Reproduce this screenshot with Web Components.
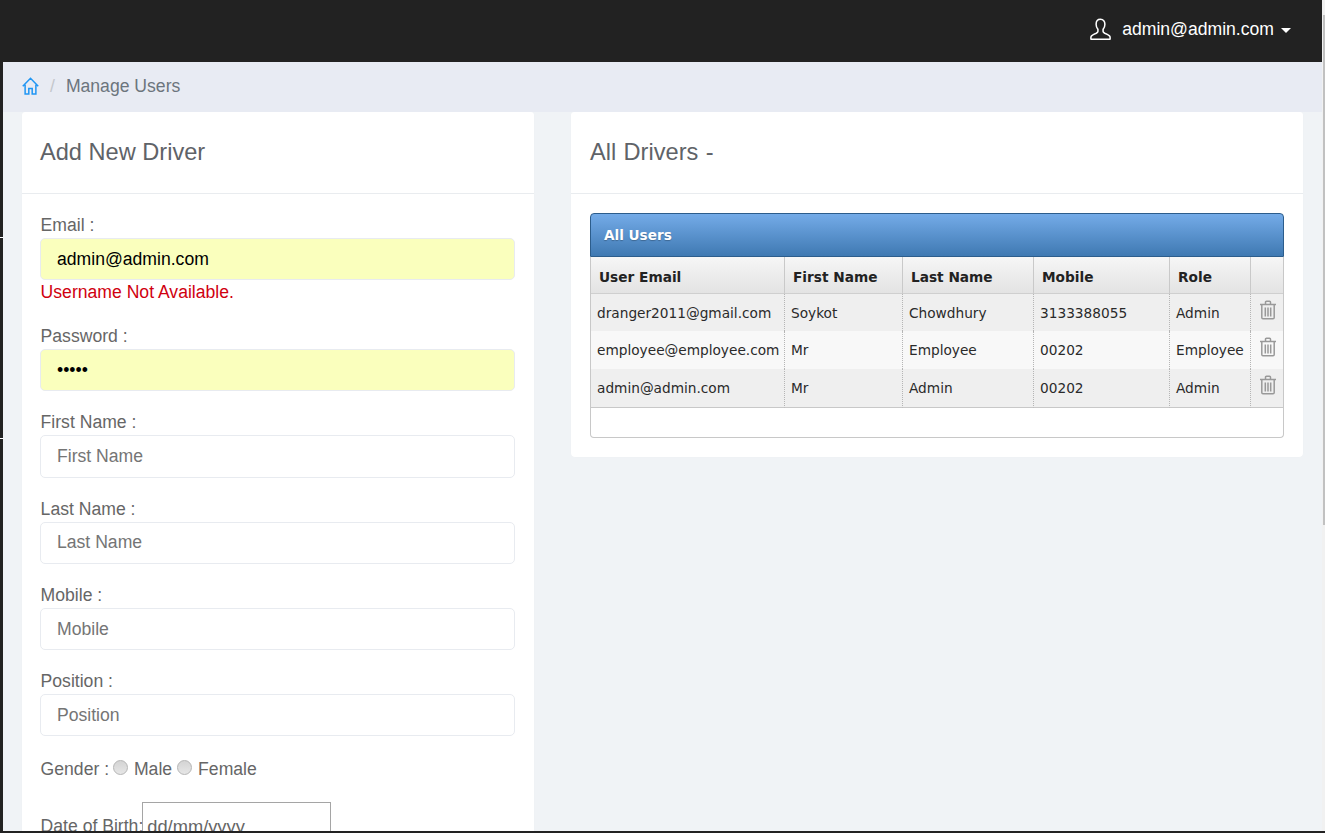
<!DOCTYPE html>
<html lang="en">
<head>
<meta charset="utf-8">
<title>Manage Users</title>
<style>
html,body{margin:0;padding:0;height:833px;overflow:hidden;background:#f0f3f6;font-family:"Liberation Sans",Arial,sans-serif}
</style>
</head>
<body>
<app-frame>
  <top-bar slot="top" email="admin@admin.com"></top-bar>
  <bread-crumb slot="top" page="Manage Users"></bread-crumb>
  <content-card title="Add New Driver" slot="left" style="--pad-l:18px">
    <form-field label="Email :" value="admin@admin.com" filled error="Username Not Available."></form-field>
    <form-field label="Password :" value="admin" type="password" filled></form-field>
    <form-field label="First Name :" placeholder="First Name"></form-field>
    <form-field label="Last Name :" placeholder="Last Name"></form-field>
    <form-field label="Mobile :" placeholder="Mobile"></form-field>
    <form-field label="Position :" placeholder="Position"></form-field>
    <gender-dob></gender-dob>
  </content-card>
  <content-card title="All Drivers -" slot="right" style="--ws:.8px">
    <users-grid></users-grid>
  </content-card>
</app-frame>

<script>
class Base extends HTMLElement{
  render(html){ if(!this.shadowRoot) this.attachShadow({mode:'open'}); this.shadowRoot.innerHTML=html; }
}
customElements.define('app-frame',class extends Base{connectedCallback(){this.render(`
<style>
:host{display:flex;flex-direction:column;width:1325px;height:833px;overflow:hidden;background:#f0f3f6}
.row{display:flex;flex:1;min-height:0}
.rail{position:relative;flex:0 0 3px;background:#222}
.tick{position:absolute;left:0;width:3px;height:1px;background:#fff}
.main{flex:1;min-width:0;display:flex;flex-direction:column;overflow:hidden}
.bar{position:relative;flex:0 0 3px;background:#f1f1f1}
.thumb{position:absolute;left:1px;top:15px;width:2px;height:510px;background:#c1c1c1}
.cols{flex:1;min-height:0;display:flex;align-items:flex-start;padding:0 19px;gap:37px;overflow:hidden}
.l{flex:0 0 512px}.r{flex:0 0 732px}
.bottom{flex:0 0 2px;background:#222}
</style>
<div class="row">
  <div class="rail"><i class="tick" style="top:237px"></i><i class="tick" style="top:438px"></i></div>
  <div class="main">
    <slot name="top"></slot>
    <div class="cols"><div class="l"><slot name="left"></slot></div><div class="r"><slot name="right"></slot></div></div>
  </div>
  <div class="bar"><i class="thumb"></i></div>
</div>
<div class="bottom"></div>`)}});

customElements.define('top-bar',class extends Base{connectedCallback(){this.render(`
<style>
:host{display:flex;align-items:center;justify-content:flex-end;box-sizing:border-box;height:62px;margin-left:-3px;background:#222;color:#fff;font-size:17.6px;padding:0 31px 4px 0}
svg{display:block}
.u{margin-right:11px}
.c{margin-left:7px;margin-top:2px}
</style>
<svg class="u" width="21" height="22" viewBox="0 0 22 22" preserveAspectRatio="none" fill="none" stroke="#fff" stroke-width="1.6" stroke-linejoin="round"><path d="M11 1.2c-3 0-4.600 2.200-4.600 5 0 2.200.8 4 1.900 5.200v2.200c0 .7-.6 1.100-1.700 1.600-2.600 1-4.800 1.900-5.400 3.200-.3.7-.3 2-.2 2.800h20c.1-.8.1-2.100-.2-2.800-.6-1.300-2.800-2.200-5.400-3.200-1.100-.5-1.700-.9-1.700-1.600v-2.200c1.100-1.200 1.900-3 1.900-5.200 0-2.800-1.600-5-4.600-5z"/></svg>
<span>${this.getAttribute('email')}</span><svg class="c" width="10" height="5" viewBox="0 0 10 5"><path fill="#fff" d="M0 0h10L5 5z"/></svg>`)}});

customElements.define('bread-crumb',class extends Base{connectedCallback(){this.render(`
<style>
:host{display:flex;align-items:center;box-sizing:border-box;height:50px;background:#e8ebf3;padding:0 0 2px 19px;font-size:17.6px;color:#6c757d}
svg{display:block;margin-top:0}
.s{color:#c4c7cc;margin:0 11px}
</style>
<svg width="17" height="18" viewBox="0 0 18 18" preserveAspectRatio="none" fill="none" stroke="#2196f3" stroke-width="1.6" stroke-linejoin="miter"><path d="M.8 9.300 9 1.300l8.200 8M3.300 7.800v9.200h3.900v-5.500h3.600v5.500h3.900V7.800"/></svg>
<span class="s">/</span><span>${this.getAttribute('page')}</span>`)}});

customElements.define('content-card',class extends Base{connectedCallback(){this.render(`
<style>
:host{display:block;background:#fff;border-radius:3px 3px 4px 4px;box-shadow:0 0 1px rgba(0,0,0,.04)}
header{height:82px;box-sizing:border-box;border-bottom:1px solid #e9ecef;display:flex;align-items:center;padding:0 19px 1px var(--pad-l,19px);font-size:23.6px;color:#5f6368;word-spacing:var(--ws,0)}
.b{padding:19px 19px 19px var(--pad-l,19px)}
</style>
<header>${this.getAttribute('title')}</header>
<div class="b"><slot></slot></div>`)}});

customElements.define('form-field',class extends Base{connectedCallback(){
const g=n=>this.getAttribute(n);
const first=!this.previousElementSibling;
this.render(`
<style>
:host{display:block;margin-bottom:18px;font-size:17.6px;color:#666}
label{display:block;height:${first?25:26}px;line-height:${first?25:26}px;padding-left:.6px}
input{display:block;box-sizing:border-box;width:100%;height:42.25px;margin:0;padding:0 16px;border:1px solid #e8ebf0;border-radius:5px;font:17.6px "Liberation Sans",Arial,sans-serif;color:#000;background:#fff;outline:0}
input.f{background:#faffbd;padding-top:1px}
input::placeholder{color:#757575;opacity:1}
.e{height:24.95px;line-height:25px;color:#d0000f;padding-left:.6px}
</style>
<label>${g('label')}</label>
<input class="${this.hasAttribute('filled')?'f':''}" type="${g('type')||'text'}" ${g('value')?`value="${g('value')}"`:''} ${g('placeholder')?`placeholder="${g('placeholder')}"`:''}>
${g('error')?`<div class="e">${g('error')}</div>`:''}`)}});

customElements.define('gender-dob',class extends Base{connectedCallback(){this.render(`
<style>
:host{display:block;font-size:17.6px;color:#666;padding:2.5px 0 0 .6px}
.g{display:flex;align-items:center;height:26px;white-space:pre}
.rd{appearance:none;-webkit-appearance:none;box-sizing:border-box;flex:none;width:15px;height:15px;margin:-4px 6px 0 5px;border-radius:50%;border:1px solid #b5b5b5;background:linear-gradient(#d4d4d4,#e6e6e6)}
.rd:first-of-type{margin-left:3.9px}
.d{display:flex;align-items:flex-start;margin-top:19px;height:60px}
.d label{margin-top:11px;line-height:26px;white-space:nowrap}
.i{box-sizing:border-box;flex:none;width:189px;height:44px;margin-left:-1px;border:1px solid #a5a5a5;padding:11px 0 0 4px;color:#666;line-height:26px;font-size:18.3px}
</style>
<div class="g"><span>Gender :</span><input class="rd" type="radio" name="g"><span>Male</span><input class="rd" type="radio" name="g"><span>Female</span></div>
<div class="d"><label>Date of Birth:</label><div class="i">dd/mm/yyyy</div></div>`)}});

const rows=[
 ['dranger2011@gmail.com','Soykot','Chowdhury','3133388055','Admin'],
 ['employee@employee.com','Mr','Employee','00202','Employee'],
 ['admin@admin.com','Mr','Admin','00202','Admin']];
const trash=`<svg width="18" height="20" viewBox="0 0 18 20" fill="none" stroke="#999" stroke-width="1.5"><path d="M1 4.500h16M6.500 4V2.300c0-.6.4-1 1-1h3c.6 0 1 .4 1 1V4M2.800 5v12.500c0 .8.500 1.300 1.200 1.300h10c.7 0 1.200-.5 1.200-1.300V5M6.300 7.500v9M9 7.500v9M11.700 7.500v9"/></svg>`;
customElements.define('users-grid',class extends Base{connectedCallback(){this.render(`
<style>
:host{display:block;font-family:"DejaVu Sans",Verdana,sans-serif;font-size:13.7px;color:#222}
.cap{box-sizing:border-box;height:44px;border:1px solid #2c5d8c;border-radius:4px 4px 0 0;background:linear-gradient(#74abe8,#3f79b2);color:#fff;font-weight:700;font-size:13.6px;line-height:42px;padding-left:13px;text-shadow:0 1px 1px rgba(0,0,0,.25)}
.wrap{border:1px solid #c8c8c8;border-top:0;border-radius:0 0 4px 4px;height:181px;box-sizing:border-box;background:#fff}
table{border-collapse:separate;border-spacing:0;table-layout:fixed;width:100%}
th{box-sizing:border-box;height:37px;padding:4px 0 0 8px;text-align:left;font-weight:700;color:#222;background:linear-gradient(#f6f6f6,#e3e3e3);border-right:1px solid #c9c9c9;border-bottom:1px solid #cfcfcf;white-space:nowrap}
td{box-sizing:border-box;height:38px;padding:0 0 0 6px;white-space:nowrap;border-right:1px dotted #b5b5b5;background:#efefef;color:#2a2a2a}
tr:nth-child(1) td{height:37px}
tr:nth-child(2) td{background:#f8f8f8}
tr:last-child td{height:39px;border-bottom:1px solid #c8c8c8}
th:last-child,td:last-child{border-right:0}
td:last-child{padding:0 0 6px 8px}
td svg{display:block}
</style>
<div class="cap">All Users</div>
<div class="wrap"><table>
<colgroup><col style="width:194px"><col style="width:118px"><col style="width:131px"><col style="width:136px"><col style="width:81px"><col></colgroup>
<thead><tr><th>User Email</th><th>First Name</th><th>Last Name</th><th>Mobile</th><th>Role</th><th></th></tr></thead>
<tbody>${rows.map(r=>`<tr>${r.map(c=>`<td>${c}</td>`).join('')}<td>${trash}</td></tr>`).join('')}</tbody>
</table></div>`)}});
</script>
</body>
</html>
